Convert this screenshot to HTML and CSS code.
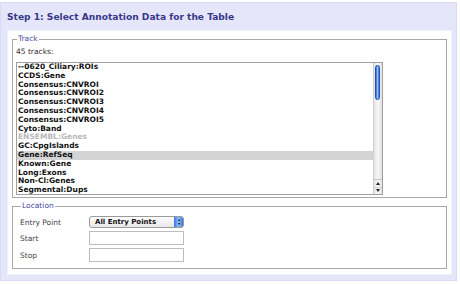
FILE: index.html
```html
<!DOCTYPE html>
<html lang="en">
  <head>
    <meta charset="UTF-8" />
    <meta name="viewport" content="width=device-width, initial-scale=1.0" />
    <title>Table Browser - Step 1</title>
    <link rel="stylesheet" href="styles.css">
  </head>
  <body>
    <div class="panel">
      <h2>Step 1: Select Annotation Data for the Table</h2>

      <div class="content">
        <fieldset class="track-set">
          <legend>Track</legend>
          <div class="count">45 tracks:</div>
          <div class="listbox">
            <ul class="tracks">
              <li>--0620_Ciliary:ROIs</li>
              <li>CCDS:Gene</li>
              <li>Consensus:CNVROI</li>
              <li>Consensus:CNVROI2</li>
              <li>Consensus:CNVROI3</li>
              <li>Consensus:CNVROI4</li>
              <li>Consensus:CNVROI5</li>
              <li>Cyto:Band</li>
              <li class="disabled">ENSEMBL:Genes</li>
              <li>GC:CpgIslands</li>
              <li class="selected">Gene:RefSeq</li>
              <li>Known:Gene</li>
              <li>Long:Exons</li>
              <li>Non-Cl:Genes</li>
              <li>Segmental:Dups</li>
            </ul>
            <div class="scrollbar">
              <div class="thumb"></div>
              <div class="arrows">
                <span class="arrow up"></span>
                <span class="arrow down"></span>
              </div>
            </div>
          </div>
        </fieldset>

        <fieldset class="location-set">
          <legend>Location</legend>
          <div class="row first">
            <label>Entry Point</label>
            <div class="select">
              <span class="select-text">All Entry Points</span>
              <span class="select-btn">
                <span class="arrow up"></span>
                <span class="arrow down"></span>
              </span>
            </div>
          </div>
          <div class="row">
            <label for="start">Start</label>
            <input type="text" id="start" />
          </div>
          <div class="row">
            <label for="stop">Stop</label>
            <input type="text" id="stop" />
          </div>
        </fieldset>
      </div>
    </div>
  </body>
</html>
```

FILE: styles.css
```css
body {
  margin: 0;
  background-color: #fff;
  font-family: "DejaVu Sans", Verdana, sans-serif;
}
.panel {
  box-sizing: border-box;
  height: 279px;
  margin: 2px 3px 0 0;
  padding: 0 4px 0 6px;
  background-color: #e6e6fa;
  border: 1px solid #dadaf0;
}
h2 {
  margin: 0;
  height: 27px;
  line-height: 29px;
  font-size: 9.1px;
  font-weight: bold;
  color: #38388a;
}
.content {
  box-sizing: border-box;
  height: 245px;
  padding: 3px 4px 0 4px;
  background-color: #fff;
  border: 1px solid #f2f2fb;
}
fieldset {
  box-sizing: border-box;
  margin: 0;
  padding: 0 3px 2px 3px;
  border: 1px solid #a8a8a8;
  min-width: 0;
}
legend {
  padding: 0 1px;
  margin-left: 1px;
  font-size: 7.5px;
  line-height: 10px;
  color: #4a4aa0;
}
.track-set {
  height: 164px;
}
.count {
  margin-top: 3px;
  font-size: 7.5px;
  line-height: 10px;
  color: #333;
}
.listbox {
  box-sizing: border-box;
  display: flex;
  width: 367px;
  height: 133px;
  margin-top: 5px;
  border: 1px solid #a0a0a0;
  overflow: hidden;
}
.tracks {
  flex: 1;
  margin: 0;
  padding: 0;
  list-style: none;
  overflow: hidden;
}
.tracks li {
  height: 8.8px;
  line-height: 8.8px;
  padding-left: 1px;
  font-size: 7.5px;
  font-weight: bold;
  color: #111;
  white-space: nowrap;
}
.tracks li.disabled {
  color: #b8b8b8;
}
.tracks li.selected {
  background-color: #d4d4d4;
}
.scrollbar {
  position: relative;
  width: 8px;
  border-left: 1px solid #d0d0d0;
  background: linear-gradient(to right, #e4e4e4, #f8f8f8 50%, #e0e0e0);
}
.thumb {
  position: absolute;
  top: 2px;
  left: 1px;
  width: 5px;
  height: 35px;
  border-radius: 3px;
  background: linear-gradient(to right, #2f62d8, #8fc0f8 50%, #3a6ee0);
  border: 1px solid #1f4fb8;
  box-sizing: border-box;
}
.arrows {
  position: absolute;
  bottom: 0;
  left: 0;
  right: 0;
  height: 14px;
  display: flex;
  flex-direction: column;
  border-top: 1px solid #c4c4c4;
}
.arrow {
  flex: 1;
  display: flex;
  justify-content: center;
  align-items: center;
}
.arrow::before {
  content: "";
  border-left: 2px solid transparent;
  border-right: 2px solid transparent;
}
.arrow.up::before {
  border-bottom: 3px solid #222;
}
.arrows .arrow.down {
  border-top: 1px solid #d0d0d0;
}
.arrow.down::before {
  border-top: 3px solid #222;
}
.location-set {
  height: 68px;
  margin-top: 3px;
  padding: 0 0 0 7px;
}
.row {
  display: flex;
  align-items: center;
  height: 16px;
  margin-top: 1px;
}
.row.first {
  margin-top: 4px;
  height: 14px;
}
.row label {
  width: 69px;
  font-size: 7.5px;
  color: #444;
}
.select {
  box-sizing: border-box;
  display: flex;
  align-items: center;
  width: 95px;
  height: 12px;
  padding-left: 5px;
  border: 1px solid #9a9a9a;
  border-radius: 3px;
  background: linear-gradient(#fdfdfd, #e8e8e8);
  font-size: 7px;
  font-weight: bold;
  color: #111;
}
.select-text {
  flex: 1;
}
.select-btn {
  display: flex;
  flex-direction: column;
  width: 9px;
  height: 10px;
  padding: 1px 0;
  box-sizing: border-box;
  border-radius: 0 2px 2px 0;
  background: linear-gradient(to right, #3b74e0, #8dbdf6 50%, #3b74e0);
}
.select-btn .arrow::before {
  border-left-width: 1.5px;
  border-right-width: 1.5px;
}
.select-btn .arrow.up::before {
  border-bottom: 2px solid #111;
}
.select-btn .arrow.down::before {
  border-top: 2px solid #111;
}
input {
  box-sizing: border-box;
  width: 95px;
  height: 14px;
  margin: 0;
  padding: 0 2px;
  border: 1px solid #bdbdbd;
  font-size: 7px;
}
```
